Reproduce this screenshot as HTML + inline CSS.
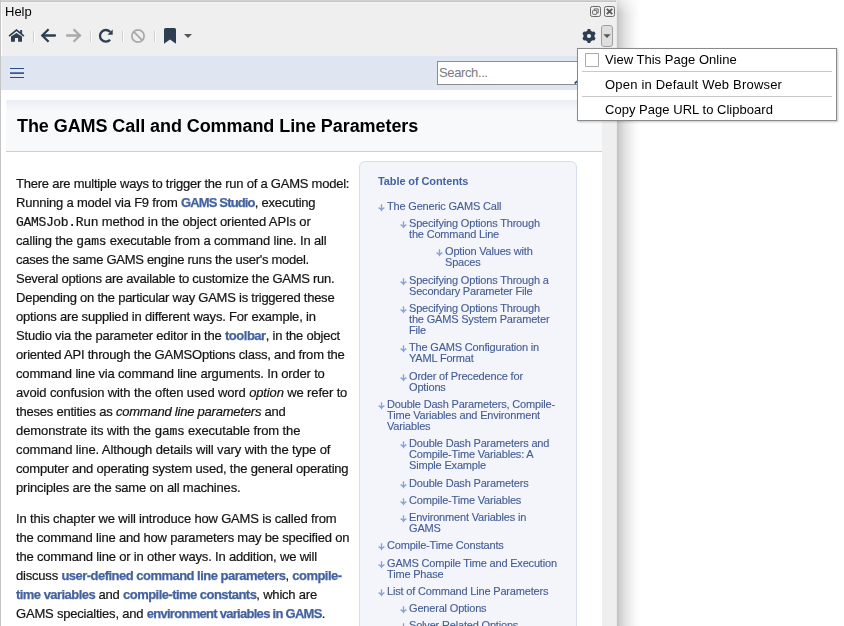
<!DOCTYPE html>
<html><head><meta charset="utf-8">
<style>
html,body{margin:0;padding:0;width:844px;height:626px;overflow:hidden;background:#fff;font-family:"Liberation Sans",sans-serif;}
.abs{position:absolute;}
#win{will-change:transform;position:absolute;left:0;top:0;width:617px;height:626px;background:#efefef;overflow:hidden;}
#topb{position:absolute;left:0;top:0;width:617px;height:3px;background:linear-gradient(#d2d2d2 0,#d2d2d2 1px,#c5c5c5 1px,#c5c5c5 2px,#f3f3f3 2px);}
#leftb{position:absolute;left:0;top:0;width:1px;height:626px;background:#c4c4c4;}
#leftw{position:absolute;left:1px;top:2px;width:1px;height:54px;background:#fff;}
#rightb{position:absolute;left:616px;top:0;width:1px;height:626px;background:#e9e9e9;}
#shadow{position:absolute;left:617px;top:0;width:24px;height:626px;background:linear-gradient(to right,#c0c0c0 0px,#d0d0d0 3px,#e2e2e2 8px,#eeeeee 13px,#f8f8f8 18px,#fff 23px);}
#shtop{position:absolute;left:617px;top:0;width:25px;height:14px;background:linear-gradient(rgba(255,255,255,.55),rgba(255,255,255,0));}
#helpt{position:absolute;left:5px;top:4px;font-size:13px;color:#000;}
#bluebar{position:absolute;left:1px;top:56px;width:615px;height:34px;background:#dfe6f1;}
#content{position:absolute;left:1px;top:90px;width:601px;height:536px;background:#fff;}
#vstrip{position:absolute;left:602px;top:90px;width:14px;height:536px;background:#efefef;}
#titlebox{position:absolute;left:6px;top:100px;width:596px;height:51px;background:linear-gradient(#eaeef4 0px,#f2f4f8 6px,#f8f9fb 11px,#f8f9fb);border-bottom:1px solid #c5d0e6;}
#title{position:absolute;left:17px;top:116px;letter-spacing:-0.07px;font-size:18px;font-weight:bold;color:#000;white-space:nowrap;}
.ln{position:absolute;left:16px;font-size:13px;line-height:19px;height:19px;color:#141414;-webkit-text-stroke:0.2px #141414;white-space:nowrap;}
.ln a{-webkit-text-stroke:0.25px #44629f;color:#44629f;font-weight:bold;text-decoration:none;letter-spacing:-0.6px;}
.ln code{font-family:"Liberation Mono",monospace;font-size:13px;letter-spacing:-0.33px;}
#toc{position:absolute;left:359px;top:161px;width:216px;height:480px;background:#f3f5fa;border:1px solid #d5ddee;border-radius:6px;}
#toct{position:absolute;left:378px;top:175px;font-size:11px;font-weight:bold;color:#4663a0;letter-spacing:-0.1px;}
.ti{position:absolute;font-size:11px;line-height:11px;color:#445d96;-webkit-text-stroke:0.12px #445d96;white-space:nowrap;letter-spacing:-0.18px;}
.ar{position:absolute;width:8px;height:9px;}
#menu{position:absolute;z-index:5;left:577px;top:48px;width:258px;height:71px;background:#fff;border:1px solid #8a8a8a;box-shadow:1px 1px 2px rgba(0,0,0,.22);}
.mi{position:absolute;z-index:6;left:605px;font-size:13px;color:#000;white-space:nowrap;}
.sep{position:absolute;z-index:6;left:582px;width:250px;height:1px;background:#c8c8c8;}
</style></head><body>
<div id="win">
  <div id="topb"></div>
  <div id="leftb"></div>
  <div id="leftw"></div>
  <div id="helpt">Help</div>
  <div id="bluebar"></div>
  <div id="content"></div>
  <div id="vstrip"></div>
  <div id="rightb"></div>
  <div id="titlebox"></div>
  <div id="title">The GAMS Call and Command Line Parameters</div>

<div class="ln" style="top:174px"><span style="letter-spacing:-0.231px">There are multiple ways to trigger the run of a GAMS model:</span></div>
<div class="ln" style="top:193px"><span style="letter-spacing:-0.2px">Running a model via F9 from <a style="letter-spacing:-0.843px">GAMS Studio</a>, executing</span></div>
<div class="ln" style="top:212px"><span style="letter-spacing:-0.113px"><code>GAMSJob.Run</code> method in the object oriented APIs or</span></div>
<div class="ln" style="top:231px"><span style="letter-spacing:-0.150px">calling the <code>gams</code> executable from a command line. In all</span></div>
<div class="ln" style="top:250px"><span style="letter-spacing:-0.283px">cases the same GAMS engine runs the user's model.</span></div>
<div class="ln" style="top:269px"><span style="letter-spacing:-0.263px">Several options are available to customize the GAMS run.</span></div>
<div class="ln" style="top:288px"><span style="letter-spacing:-0.242px">Depending on the particular way GAMS is triggered these</span></div>
<div class="ln" style="top:307px"><span style="letter-spacing:-0.196px">options are supplied in different ways. For example, in</span></div>
<div class="ln" style="top:326px"><span style="letter-spacing:-0.2px">Studio via the parameter editor in the <a style="letter-spacing:-0.484px">toolbar</a>, in the object</span></div>
<div class="ln" style="top:345px"><span style="letter-spacing:-0.210px">oriented API through the GAMSOptions class, and from the</span></div>
<div class="ln" style="top:364px"><span style="letter-spacing:-0.164px">command line via command line arguments. In order to</span></div>
<div class="ln" style="top:383px"><span style="letter-spacing:-0.131px">avoid confusion with the often used word <i>option</i> we refer to</span></div>
<div class="ln" style="top:402px"><span style="letter-spacing:-0.219px">theses entities as <i>command line parameters</i> and</span></div>
<div class="ln" style="top:421px"><span style="letter-spacing:-0.095px">demonstrate its with the <code>gams</code> executable from the</span></div>
<div class="ln" style="top:440px"><span style="letter-spacing:-0.115px">command line. Although details will vary with the type of</span></div>
<div class="ln" style="top:459px"><span style="letter-spacing:-0.204px">computer and operating system used, the general operating</span></div>
<div class="ln" style="top:478px"><span style="letter-spacing:-0.189px">principles are the same on all machines.</span></div>
<div class="ln" style="top:509px"><span style="letter-spacing:-0.172px">In this chapter we will introduce how GAMS is called from</span></div>
<div class="ln" style="top:528px"><span style="letter-spacing:-0.194px">the command line and how parameters may be specified on</span></div>
<div class="ln" style="top:547px"><span style="letter-spacing:-0.177px">the command line or in other ways. In addition, we will</span></div>
<div class="ln" style="top:566px"><span style="letter-spacing:-0.2px">discuss <a style="letter-spacing:-0.519px">user-defined command line parameters</a>, <a style="letter-spacing:-0.519px">compile-</a></span></div>
<div class="ln" style="top:585px"><span style="letter-spacing:-0.2px"><a style="letter-spacing:-0.542px">time variables</a> and <a style="letter-spacing:-0.542px">compile-time constants</a>, which are</span></div>
<div class="ln" style="top:604px"><span style="letter-spacing:-0.2px">GAMS specialties, and <a style="letter-spacing:-0.718px">environment variables in GAMS</a>.</span></div>
<div id="toc"></div>
<div id="toct">Table of Contents</div>
<div class="ti" style="left:387px;top:201px"><span>The Generic GAMS Call</span></div>
<svg class="ar" style="left:378px;top:203px" width="8" height="9" viewBox="0 0 8 9"><path d="M3.5,1.3 V7.2 M0.6,4.7 Q2.6,5.7 3.5,7.3 Q4.4,5.7 6.4,4.7" fill="none" stroke="#87a0d2" stroke-width="1.3"/></svg>
<div class="ti" style="left:409px;top:218px"><span>Specifying Options Through</span></div>
<div class="ti" style="left:409px;top:229px"><span>the Command Line</span></div>
<svg class="ar" style="left:400px;top:220px" width="8" height="9" viewBox="0 0 8 9"><path d="M3.5,1.3 V7.2 M0.6,4.7 Q2.6,5.7 3.5,7.3 Q4.4,5.7 6.4,4.7" fill="none" stroke="#87a0d2" stroke-width="1.3"/></svg>
<div class="ti" style="left:445px;top:246px"><span>Option Values with</span></div>
<div class="ti" style="left:445px;top:257px"><span>Spaces</span></div>
<svg class="ar" style="left:436px;top:248px" width="8" height="9" viewBox="0 0 8 9"><path d="M3.5,1.3 V7.2 M0.6,4.7 Q2.6,5.7 3.5,7.3 Q4.4,5.7 6.4,4.7" fill="none" stroke="#87a0d2" stroke-width="1.3"/></svg>
<div class="ti" style="left:409px;top:275px"><span>Specifying Options Through a</span></div>
<div class="ti" style="left:409px;top:286px"><span>Secondary Parameter File</span></div>
<svg class="ar" style="left:400px;top:277px" width="8" height="9" viewBox="0 0 8 9"><path d="M3.5,1.3 V7.2 M0.6,4.7 Q2.6,5.7 3.5,7.3 Q4.4,5.7 6.4,4.7" fill="none" stroke="#87a0d2" stroke-width="1.3"/></svg>
<div class="ti" style="left:409px;top:303px"><span>Specifying Options Through</span></div>
<div class="ti" style="left:409px;top:314px"><span>the GAMS System Parameter</span></div>
<div class="ti" style="left:409px;top:325px"><span>File</span></div>
<svg class="ar" style="left:400px;top:305px" width="8" height="9" viewBox="0 0 8 9"><path d="M3.5,1.3 V7.2 M0.6,4.7 Q2.6,5.7 3.5,7.3 Q4.4,5.7 6.4,4.7" fill="none" stroke="#87a0d2" stroke-width="1.3"/></svg>
<div class="ti" style="left:409px;top:342px"><span>The GAMS Configuration in</span></div>
<div class="ti" style="left:409px;top:353px"><span>YAML Format</span></div>
<svg class="ar" style="left:400px;top:344px" width="8" height="9" viewBox="0 0 8 9"><path d="M3.5,1.3 V7.2 M0.6,4.7 Q2.6,5.7 3.5,7.3 Q4.4,5.7 6.4,4.7" fill="none" stroke="#87a0d2" stroke-width="1.3"/></svg>
<div class="ti" style="left:409px;top:371px"><span>Order of Precedence for</span></div>
<div class="ti" style="left:409px;top:382px"><span>Options</span></div>
<svg class="ar" style="left:400px;top:373px" width="8" height="9" viewBox="0 0 8 9"><path d="M3.5,1.3 V7.2 M0.6,4.7 Q2.6,5.7 3.5,7.3 Q4.4,5.7 6.4,4.7" fill="none" stroke="#87a0d2" stroke-width="1.3"/></svg>
<div class="ti" style="left:387px;top:399px"><span>Double Dash Parameters, Compile-</span></div>
<div class="ti" style="left:387px;top:410px"><span>Time Variables and Environment</span></div>
<div class="ti" style="left:387px;top:421px"><span>Variables</span></div>
<svg class="ar" style="left:378px;top:401px" width="8" height="9" viewBox="0 0 8 9"><path d="M3.5,1.3 V7.2 M0.6,4.7 Q2.6,5.7 3.5,7.3 Q4.4,5.7 6.4,4.7" fill="none" stroke="#87a0d2" stroke-width="1.3"/></svg>
<div class="ti" style="left:409px;top:438px"><span>Double Dash Parameters and</span></div>
<div class="ti" style="left:409px;top:449px"><span>Compile-Time Variables: A</span></div>
<div class="ti" style="left:409px;top:460px"><span>Simple Example</span></div>
<svg class="ar" style="left:400px;top:440px" width="8" height="9" viewBox="0 0 8 9"><path d="M3.5,1.3 V7.2 M0.6,4.7 Q2.6,5.7 3.5,7.3 Q4.4,5.7 6.4,4.7" fill="none" stroke="#87a0d2" stroke-width="1.3"/></svg>
<div class="ti" style="left:409px;top:478px"><span>Double Dash Parameters</span></div>
<svg class="ar" style="left:400px;top:480px" width="8" height="9" viewBox="0 0 8 9"><path d="M3.5,1.3 V7.2 M0.6,4.7 Q2.6,5.7 3.5,7.3 Q4.4,5.7 6.4,4.7" fill="none" stroke="#87a0d2" stroke-width="1.3"/></svg>
<div class="ti" style="left:409px;top:495px"><span>Compile-Time Variables</span></div>
<svg class="ar" style="left:400px;top:497px" width="8" height="9" viewBox="0 0 8 9"><path d="M3.5,1.3 V7.2 M0.6,4.7 Q2.6,5.7 3.5,7.3 Q4.4,5.7 6.4,4.7" fill="none" stroke="#87a0d2" stroke-width="1.3"/></svg>
<div class="ti" style="left:409px;top:512px"><span>Environment Variables in</span></div>
<div class="ti" style="left:409px;top:523px"><span>GAMS</span></div>
<svg class="ar" style="left:400px;top:514px" width="8" height="9" viewBox="0 0 8 9"><path d="M3.5,1.3 V7.2 M0.6,4.7 Q2.6,5.7 3.5,7.3 Q4.4,5.7 6.4,4.7" fill="none" stroke="#87a0d2" stroke-width="1.3"/></svg>
<div class="ti" style="left:387px;top:540px"><span>Compile-Time Constants</span></div>
<svg class="ar" style="left:378px;top:542px" width="8" height="9" viewBox="0 0 8 9"><path d="M3.5,1.3 V7.2 M0.6,4.7 Q2.6,5.7 3.5,7.3 Q4.4,5.7 6.4,4.7" fill="none" stroke="#87a0d2" stroke-width="1.3"/></svg>
<div class="ti" style="left:387px;top:558px"><span>GAMS Compile Time and Execution</span></div>
<div class="ti" style="left:387px;top:569px"><span>Time Phase</span></div>
<svg class="ar" style="left:378px;top:560px" width="8" height="9" viewBox="0 0 8 9"><path d="M3.5,1.3 V7.2 M0.6,4.7 Q2.6,5.7 3.5,7.3 Q4.4,5.7 6.4,4.7" fill="none" stroke="#87a0d2" stroke-width="1.3"/></svg>
<div class="ti" style="left:387px;top:586px"><span>List of Command Line Parameters</span></div>
<svg class="ar" style="left:378px;top:588px" width="8" height="9" viewBox="0 0 8 9"><path d="M3.5,1.3 V7.2 M0.6,4.7 Q2.6,5.7 3.5,7.3 Q4.4,5.7 6.4,4.7" fill="none" stroke="#87a0d2" stroke-width="1.3"/></svg>
<div class="ti" style="left:409px;top:603px"><span>General Options</span></div>
<svg class="ar" style="left:400px;top:605px" width="8" height="9" viewBox="0 0 8 9"><path d="M3.5,1.3 V7.2 M0.6,4.7 Q2.6,5.7 3.5,7.3 Q4.4,5.7 6.4,4.7" fill="none" stroke="#87a0d2" stroke-width="1.3"/></svg>
<div class="ti" style="left:409px;top:620px"><span>Solver Related Options</span></div>
<svg class="ar" style="left:400px;top:622px" width="8" height="9" viewBox="0 0 8 9"><path d="M3.5,1.3 V7.2 M0.6,4.7 Q2.6,5.7 3.5,7.3 Q4.4,5.7 6.4,4.7" fill="none" stroke="#87a0d2" stroke-width="1.3"/></svg>
</div>
<div id="shadow"></div><div id="shtop"></div>
<div id="menu"></div>
<div class="abs" style="z-index:6;left:585px;top:53px;width:12px;height:12px;border:1px solid #adadad;background:#fff;"></div>
<div class="mi" style="top:52px;letter-spacing:0.03px">View This Page Online</div>
<div class="sep" style="top:71px"></div>
<div class="mi" style="top:77px;letter-spacing:0.2px">Open in Default Web Browser</div>
<div class="sep" style="top:96px"></div>
<div class="mi" style="top:102px;letter-spacing:0.03px">Copy Page URL to Clipboard</div>

<svg class="abs" style="left:0;top:0" width="844" height="626" viewBox="0 0 844 626">
 <!-- home -->
 <g fill="#2c3e50">
  <polyline points="9.6,35.6 16.5,30 23.4,35.6" fill="none" stroke="#2c3e50" stroke-width="1.7" stroke-linecap="round" stroke-linejoin="miter"/>
  <rect x="20.2" y="30" width="1.9" height="3.6"/>
  <path d="M11,36.6 L16.5,32.9 L22,36.6 V41.8 H18.1 V38 H14.9 V41.8 H11 Z"/>
 </g>
 <!-- separators -->
 <g>
  <rect x="33" y="31" width="1" height="11" fill="#cfcfcf"/><rect x="34" y="31" width="1" height="11" fill="#fff"/>
  <rect x="90" y="31" width="1" height="11" fill="#cfcfcf"/><rect x="91" y="31" width="1" height="11" fill="#fff"/>
  <rect x="122" y="31" width="1" height="11" fill="#cfcfcf"/><rect x="123" y="31" width="1" height="11" fill="#fff"/>
  <rect x="154" y="31" width="1" height="11" fill="#cfcfcf"/><rect x="155" y="31" width="1" height="11" fill="#fff"/>
 </g>
 <!-- back -->
 <g fill="none" stroke="#2c3e50" stroke-width="2.3">
  <line x1="43" y1="35.5" x2="55" y2="35.5" stroke-linecap="round"/>
  <polyline points="48.6,29.2 42.3,35.5 48.6,41.8"/>
 </g>
 <!-- forward -->
 <g fill="none" stroke="#a9a9a9" stroke-width="2.3">
  <line x1="67" y1="35.5" x2="79.5" y2="35.5" stroke-linecap="round"/>
  <polyline points="73.6,29.2 79.9,35.5 73.6,41.8"/>
 </g>
 <!-- reload -->
 <g>
  <path d="M110.24,32.07 A5.8,5.8 0 1 0 110.11,39.68" fill="none" stroke="#2c3e50" stroke-width="2.3"/>
  <path d="M112.7,29.6 V34.8 H107.5 Z" fill="#2c3e50"/>
 </g>
 <!-- ban -->
 <g fill="none" stroke="#a9a9a9" stroke-width="1.8">
  <circle cx="138" cy="36" r="6.1"/>
  <line x1="133.7" y1="31.7" x2="142.3" y2="40.3"/>
 </g>
 <!-- bookmark -->
 <path d="M164,29.5 Q164,28 165.5,28 H174.5 Q176,28 176,29.5 V43.7 L170,39.6 L164,43.7 Z" fill="#2c3e50"/>
 <path d="M184,34 H192 L188,38 Z" fill="#555"/>
 <!-- gear -->
 <g transform="translate(589,36)" fill="#2c3e50">
  <circle r="5.6"/>
  <rect x="-1.65" y="-6.9" width="3.3" height="13.8" rx="0.9"/>
  <rect x="-1.65" y="-6.9" width="3.3" height="13.8" rx="0.9" transform="rotate(60)"/>
  <rect x="-1.65" y="-6.9" width="3.3" height="13.8" rx="0.9" transform="rotate(120)"/>
  <circle r="2.1" fill="#efefef"/>
 </g>
 <!-- dropdown button -->
 <rect x="601.5" y="25.5" width="11" height="21" rx="2.5" fill="#dedede" stroke="#a0a0a0" stroke-width="1"/>
 <path d="M603.4,34.3 H610.6 L607,38 Z" fill="#555"/>
 <!-- float & close -->
 <rect x="590.5" y="6.5" width="10" height="10" rx="1.8" fill="none" stroke="#6a6a6a" stroke-width="1"/>
 <path d="M594.3,10 V8.9 H598.2 V12.8 H597" fill="none" stroke="#6a6a6a" stroke-width="1"/>
 <rect x="592.6" y="10.4" width="4.1" height="4" rx="0.7" fill="#efefef" stroke="#6a6a6a" stroke-width="1"/>
 <rect x="604.5" y="6.5" width="10" height="10" rx="1.8" fill="none" stroke="#6a6a6a" stroke-width="1"/>
 <g stroke="#5a5a5a" stroke-width="1.9"><line x1="606.8" y1="8.8" x2="612.2" y2="14.2"/><line x1="612.2" y1="8.8" x2="606.8" y2="14.2"/></g>
 <!-- hamburger -->
 <g fill="#2a4a8a"><rect x="10" y="68" width="14" height="1"/><rect x="10" y="72.3" width="14" height="1.6"/><rect x="10" y="77" width="14" height="1"/></g>
</svg>

<div class="abs" style="left:437px;top:61px;width:152px;height:22px;background:#fff;border:1px solid #8c8c8c;"></div>
<div class="abs" style="left:439px;top:65px;font-size:13px;color:#7a7a7a;letter-spacing:-0.38px;">Search...</div>
<svg class="abs" style="left:573px;top:79px" width="6" height="6"><path d="M1.8,4.6 L4,2" stroke="#2a4a8a" stroke-width="1.8"/></svg>
</body></html>
